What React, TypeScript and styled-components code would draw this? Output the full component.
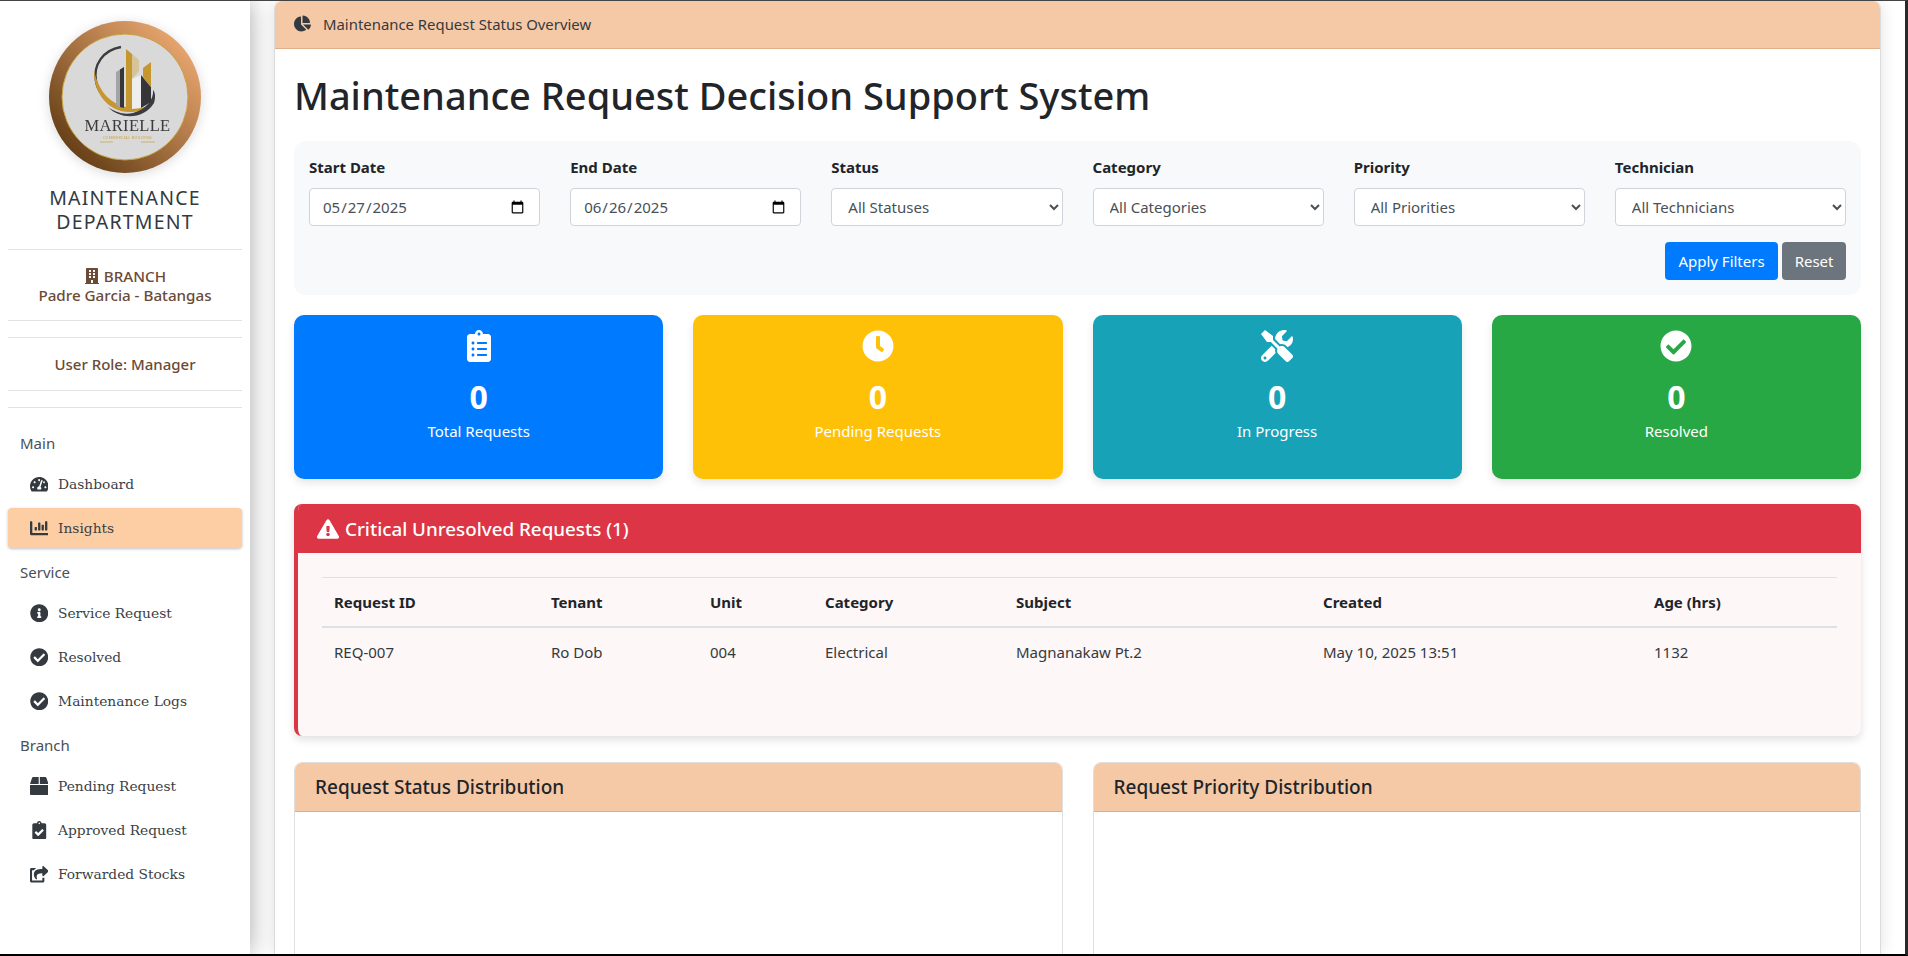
import React from 'react';
import styled, { createGlobalStyle } from 'styled-components';
import {
  FaBox,
  FaBuilding,
  FaChartBar,
  FaChartPie,
  FaCheckCircle,
  FaClipboardCheck,
  FaClipboardList,
  FaClock,
  FaExclamationTriangle,
  FaInfoCircle,
  FaShareSquare,
  FaTachometerAlt,
  FaTools,
} from 'react-icons/fa';

const sans = '"Noto Sans", "Open Sans", Arial, sans-serif';
const peach = '#f6c9a6';

const GlobalStyle = createGlobalStyle`
  * { box-sizing: border-box; }
  html, body { margin: 0; padding: 0; height: 100%; overflow: hidden; }
  body { font-family: ${sans}; color: #212529; background: #fff; }
`;

const navGroups = [
  {
    label: 'Main',
    items: [
      { icon: <FaTachometerAlt />, title: 'Dashboard' },
      { icon: <FaChartBar />, title: 'Insights', active: true },
    ],
  },
  {
    label: 'Service',
    items: [
      { icon: <FaInfoCircle />, title: 'Service Request' },
      { icon: <FaCheckCircle />, title: 'Resolved' },
      { icon: <FaCheckCircle />, title: 'Maintenance Logs' },
    ],
  },
  {
    label: 'Branch',
    items: [
      { icon: <FaBox />, title: 'Pending Request' },
      { icon: <FaClipboardCheck />, title: 'Approved Request' },
      { icon: <FaShareSquare />, title: 'Forwarded Stocks' },
    ],
  },
];

const filters = [
  { label: 'Status', value: 'All Statuses' },
  { label: 'Category', value: 'All Categories' },
  { label: 'Priority', value: 'All Priorities' },
  { label: 'Technician', value: 'All Technicians' },
];

const stats = [
  { color: '#007bff', icon: <FaClipboardList />, label: 'Total Requests' },
  { color: '#ffc107', icon: <FaClock />, label: 'Pending Requests' },
  { color: '#17a2b8', icon: <FaTools />, label: 'In Progress' },
  { color: '#28a745', icon: <FaCheckCircle />, label: 'Resolved' },
];

const columns = [
  { title: 'Request ID', value: 'REQ-007', width: 217 },
  { title: 'Tenant', value: 'Ro Dob', width: 159 },
  { title: 'Unit', value: '004', width: 115 },
  { title: 'Category', value: 'Electrical', width: 191 },
  { title: 'Subject', value: 'Magnanakaw Pt.2', width: 307 },
  { title: 'Created', value: 'May 10, 2025 13:51', width: 331 },
  { title: 'Age (hrs)', value: '1132', width: 195 },
];

const Logo = () => (
  <LogoSvg viewBox="0 0 152 152">
    <defs>
      <linearGradient id="ring" x1="1" y1="0" x2="0" y2="1">
        <stop offset="0.1" stopColor="#eeaa72" />
        <stop offset="0.9" stopColor="#5f3a12" />
      </linearGradient>
    </defs>
    <circle cx="76" cy="76" r="76" fill="url(#ring)" />
    <circle cx="76" cy="76" r="63" fill="#d9d9d9" stroke="#c9a13f" strokeWidth="1" />
    <path d="M72 26 C54 29 44 44 47 60 C48 66 50 70 53 73" fill="none" stroke="#3c3c40" strokeWidth="2.4" />
    <path d="M45 49 C44 72 60 92 82 91 C88 91 93 89 97 86 C80 90 60 84 51 66 C48 60 46 55 45 49 Z" fill="#c6962f" />
    <path d="M59 86 C70 98 94 100 105 82 C107 76 106 71 104 69 C105 78 98 88 84 92 C74 94 66 91 59 86 Z" fill="#3c3c40" />
    <path d="M67 51 L71 48.5 L71 86 L67 85 Z" fill="#a3a3a5" />
    <path d="M71 48.5 L75 46 L75 87 L71 86 Z" fill="#35353a" />
    <path d="M77 28 L83 33 L83 88 L77 88 Z" fill="#c6962f" />
    <path d="M83 33 L90 39 L90 50 L83 58 Z" fill="#d4b060" opacity="0.55" />
    <path d="M83 58 L92 54 L92 87 L83 88 Z" fill="#eeeeee" />
    <path d="M92 54 L102 66 L102 81 L92 87 Z" fill="#35353a" />
    <path d="M94 47 L102 41 L102 66 L94 56 Z" fill="#c6962f" />
    <LogoName x="78.5" y="110" textAnchor="middle">MARIELLE</LogoName>
    <LogoTag x="78.5" y="118" textAnchor="middle">COMMERCIAL BUILDING</LogoTag>
    <path d="M51 121 H64 M92 121 H106" stroke="#c6a24a" strokeWidth="0.7" />
  </LogoSvg>
);

export default function App() {
  return (
    <Shell>
      <GlobalStyle />
      <Sidebar>
        <Logo />
        <DeptTitle>MAINTENANCE DEPARTMENT</DeptTitle>
        <BranchBlock>
          <FaBuilding /> BRANCH
          <br />
          Padre Garcia - Batangas
        </BranchBlock>
        <RoleBlock>User Role: Manager</RoleBlock>
        <Nav>
          {navGroups.map((group) => (
            <NavGroup key={group.label}>
              <NavLabel>{group.label}</NavLabel>
              {group.items.map((item) => (
                <NavItem key={item.title} $active={item.active}>
                  <NavIcon>{item.icon}</NavIcon>
                  {item.title}
                </NavItem>
              ))}
            </NavGroup>
          ))}
        </Nav>
      </Sidebar>

      <Main>
        <Panel>
          <TopBar>
            <FaChartPie />
            Maintenance Request Status Overview
          </TopBar>
          <Body>
            <PageTitle>Maintenance Request Decision Support System</PageTitle>

            <FilterPanel>
              <FilterGrid>
                <Field>
                  <FieldLabel>Start Date</FieldLabel>
                  <DateInput type="date" defaultValue="2025-05-27" />
                </Field>
                <Field>
                  <FieldLabel>End Date</FieldLabel>
                  <DateInput type="date" defaultValue="2025-06-26" />
                </Field>
                {filters.map((filter) => (
                  <Field key={filter.label}>
                    <FieldLabel>{filter.label}</FieldLabel>
                    <Select>
                      <option>{filter.value}</option>
                    </Select>
                  </Field>
                ))}
              </FilterGrid>
              <FilterActions>
                <ActionButton $bg="#007bff" $px={13.5}>
                  Apply Filters
                </ActionButton>
                <ActionButton $bg="#6c757d" $px={12.5}>
                  Reset
                </ActionButton>
              </FilterActions>
            </FilterPanel>

            <StatGrid>
              {stats.map((stat) => (
                <StatCard key={stat.label} $bg={stat.color}>
                  <StatIcon>{stat.icon}</StatIcon>
                  <StatValue>0</StatValue>
                  <StatLabel>{stat.label}</StatLabel>
                </StatCard>
              ))}
            </StatGrid>

            <AlertCard>
              <AlertHead>
                <FaExclamationTriangle />
                Critical Unresolved Requests (1)
              </AlertHead>
              <AlertBody>
                <Table>
                  <thead>
                    <tr>
                      {columns.map((col) => (
                        <Th key={col.title} $w={col.width}>
                          {col.title}
                        </Th>
                      ))}
                    </tr>
                  </thead>
                  <tbody>
                    <tr>
                      {columns.map((col) => (
                        <Td key={col.title}>{col.value}</Td>
                      ))}
                    </tr>
                  </tbody>
                </Table>
              </AlertBody>
            </AlertCard>

            <ChartGrid>
              <ChartCard>
                <ChartHead>Request Status Distribution</ChartHead>
              </ChartCard>
              <ChartCard>
                <ChartHead>Request Priority Distribution</ChartHead>
              </ChartCard>
            </ChartGrid>
          </Body>
        </Panel>
      </Main>
    </Shell>
  );
}

const Shell = styled.div`
  display: flex;
  height: 956px;
  overflow: hidden;
  border-top: 1px solid #444;
  border-right: 3px solid #2a2a2a;
  border-bottom: 2px solid #000;
`;

const Sidebar = styled.aside`
  flex: 0 0 250px;
  display: flex;
  flex-direction: column;
  align-items: stretch;
  padding: 20px 8px 0;
  background: #fff;
  box-shadow: 0 0 24px rgba(0, 0, 0, 0.35);
  position: relative;
  z-index: 1;
`;

const LogoSvg = styled.svg`
  width: 152px;
  height: 152px;
  align-self: center;
  flex: none;
  filter: drop-shadow(0 2px 6px rgba(0, 0, 0, 0.15));
`;

const LogoName = styled.text`
  font-family: 'Liberation Serif', serif;
  font-size: 16.5px;
  letter-spacing: 0.3px;
  fill: #3a3a3f;
`;

const LogoTag = styled.text`
  font-family: ${sans};
  font-size: 3.6px;
  letter-spacing: 0.4px;
  fill: #c6a24a;
`;

const DeptTitle = styled.div`
  margin-top: 13px;
  padding: 0 16px 15px;
  font-size: 19.5px;
  line-height: 24px;
  font-weight: 400;
  letter-spacing: 1.2px;
  text-align: center;
  color: #343a40;
  border-bottom: 1px solid #e2e2e2;
`;

const BranchBlock = styled.div`
  padding: 17px 0 15px;
  font-size: 15.2px;
  line-height: 19px;
  font-weight: 500;
  text-align: center;
  color: #6b4a36;
  border-bottom: 1px solid #e2e2e2;
  margin-bottom: 16px;

  svg {
    font-size: 16px;
    vertical-align: -2px;
  }
`;

const RoleBlock = styled.div`
  height: 54px;
  line-height: 52px;
  font-size: 15px;
  font-weight: 500;
  text-align: center;
  color: #6b4a36;
  border-top: 1px solid #e2e2e2;
  border-bottom: 1px solid #e2e2e2;
  margin-bottom: 16px;
`;

const Nav = styled.nav`
  display: flex;
  flex-direction: column;
  border-top: 1px solid #e2e2e2;
  padding-top: 25px;
`;

const NavGroup = styled.div`
  display: flex;
  flex-direction: column;
  gap: 4px;
  margin-bottom: 14px;
`;

const NavLabel = styled.div`
  padding-left: 12px;
  height: 20px;
  line-height: 20px;
  font-size: 15px;
  color: #495057;
  margin-bottom: 7px;
`;

const NavItem = styled.div<{ $active?: boolean }>`
  display: flex;
  align-items: center;
  height: 40px;
  padding-left: 20px;
  font-family: 'DejaVu Serif', Georgia, serif;
  font-size: 13.8px;
  color: #3b3f45;
  border-radius: 4px;
  background: ${(p) => (p.$active ? '#fdcea4' : 'transparent')};
  box-shadow: ${(p) => (p.$active ? '0 1px 3px rgba(0, 0, 0, 0.25)' : 'none')};
`;

const NavIcon = styled.span`
  display: flex;
  justify-content: center;
  width: 22px;
  margin-right: 8px;
  font-size: 18.5px;
  color: #343a40;
`;

const Main = styled.main`
  flex: 1;
  min-width: 0;
  padding: 0 24px;
`;

const Panel = styled.div`
  height: 100%;
  background: #fff;
  border-radius: 8px 8px 0 0;
  box-shadow: 0 0 16px rgba(0, 0, 0, 0.12);
  border-right: 1px solid #dcdcdc;
  border-left: 1px solid #dcdcdc;
  overflow: hidden;
`;

const TopBar = styled.div`
  display: flex;
  align-items: center;
  gap: 12px;
  height: 48px;
  padding: 0 19px 2px;
  font-size: 14.9px;
  color: #343a40;
  background: ${peach};
  border-bottom: 1px solid #e0ae88;

  svg {
    font-size: 17px;
  }
`;

const Body = styled.div`
  padding: 22px 19px 0;
`;

const PageTitle = styled.h1`
  margin: 0 0 22px;
  font-size: 38px;
  line-height: 48px;
  font-weight: 500;
  color: #212529;
`;

const FilterPanel = styled.section`
  padding: 15px;
  background: #f8f9fa;
  border-radius: 12px;
`;

const FilterGrid = styled.div`
  display: grid;
  grid-template-columns: repeat(6, 1fr);
  column-gap: 30px;
`;

const Field = styled.div`
  display: flex;
  flex-direction: column;
`;

const FieldLabel = styled.label`
  margin-bottom: 10px;
  font-size: 15px;
  line-height: 22px;
  font-weight: 700;
  color: #212529;
`;

const DateInput = styled.input`
  height: 38px;
  padding: 6px 12px;
  font-family: ${sans};
  font-size: 15px;
  color: #495057;
  background: #fff;
  border: 1px solid #ced4da;
  border-radius: 4px;
`;

const Select = styled.select`
  height: 38px;
  padding: 6px 12px;
  font-family: ${sans};
  font-size: 15px;
  color: #495057;
  background: #fff;
  border: 1px solid #ced4da;
  border-radius: 4px;
`;

const FilterActions = styled.div`
  display: flex;
  justify-content: flex-end;
  gap: 4px;
  margin-top: 16px;
`;

const ActionButton = styled.button<{ $bg: string; $px: number }>`
  height: 38px;
  padding: 0 ${(p) => p.$px}px;
  font-family: ${sans};
  font-size: 15px;
  color: #fff;
  background: ${(p) => p.$bg};
  border: 0;
  border-radius: 4px;
`;

const StatGrid = styled.div`
  display: grid;
  grid-template-columns: repeat(4, 1fr);
  column-gap: 30px;
  margin-top: 20px;
`;

const StatCard = styled.div<{ $bg: string }>`
  display: flex;
  flex-direction: column;
  align-items: center;
  height: 164px;
  padding-top: 15px;
  color: #fff;
  background: ${(p) => p.$bg};
  border-radius: 10px;
  box-shadow: 0 4px 8px rgba(0, 0, 0, 0.1);
`;

const StatIcon = styled.div`
  display: flex;
  height: 32px;
  font-size: 32px;
`;

const StatValue = styled.div`
  margin-top: 17px;
  font-size: 32px;
  line-height: 36px;
  font-weight: 700;
`;

const StatLabel = styled.div`
  margin-top: 5px;
  font-size: 15px;
  line-height: 22px;
`;

const AlertCard = styled.section`
  height: 232px;
  margin-top: 25px;
  background: #fdf7f7;
  border-left: 4px solid #dc3545;
  border-radius: 8px;
  box-shadow: 0 4px 8px rgba(0, 0, 0, 0.12);
  overflow: hidden;
`;

const AlertHead = styled.div`
  display: flex;
  align-items: center;
  gap: 6px;
  height: 49px;
  margin-left: -4px;
  padding: 0 23px;
  font-size: 18.8px;
  font-weight: 500;
  color: #fff;
  background: #dc3545;

  svg {
    font-size: 22px;
  }
`;

const AlertBody = styled.div`
  padding: 24px 25px 0 24px;
`;

const Table = styled.table`
  width: 100%;
  border-collapse: collapse;
  table-layout: fixed;
  font-size: 15px;
  color: #212529;
`;

const Th = styled.th<{ $w: number }>`
  width: ${(p) => p.$w}px;
  height: 49px;
  padding: 0 12px;
  text-align: left;
  font-weight: 700;
  border-top: 1px solid #dee2e6;
  border-bottom: 2px solid #dee2e6;
`;

const Td = styled.td`
  height: 50px;
  padding: 0 12px;
  color: #343a40;
`;

const ChartGrid = styled.div`
  display: grid;
  grid-template-columns: repeat(2, 1fr);
  column-gap: 30px;
  margin-top: 26px;
`;

const ChartCard = styled.section`
  height: 300px;
  background: #fff;
  border: 1px solid #dfdfdf;
  border-radius: 8px 8px 0 0;
  overflow: hidden;
`;

const ChartHead = styled.h3`
  display: flex;
  align-items: center;
  height: 49px;
  margin: 0;
  padding: 0 20px;
  font-size: 19px;
  font-weight: 500;
  color: #212529;
  background: ${peach};
  border-bottom: 1px solid #e0ae88;
`;
